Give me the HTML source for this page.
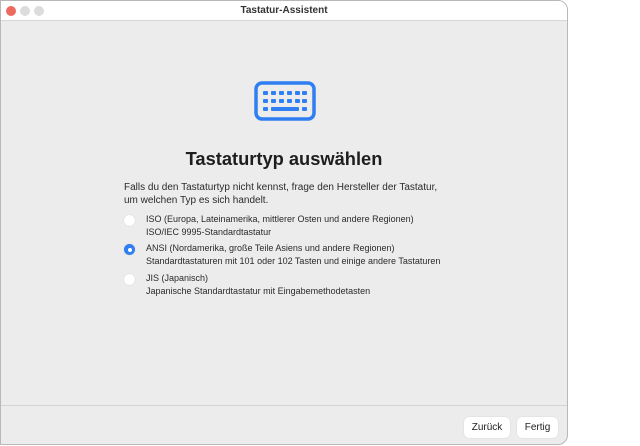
<!DOCTYPE html>
<html><head><meta charset="utf-8"><style>
*{margin:0;padding:0;box-sizing:border-box}
body{width:640px;height:446px;background:#fff;font-family:"Liberation Sans",sans-serif;position:relative;overflow:hidden}
.win{position:absolute;left:0;top:0;width:568px;height:445px;border:1px solid #b8b8b8;border-radius:0 10px 10px 0;background:#ececec;overflow:hidden}
.tb{height:20px;background:#fff;border-bottom:1px solid #d6d6d6;text-align:center;font-size:10px;font-weight:bold;color:#333;line-height:19px}
.dot{position:absolute;top:5px;width:10px;height:10px;border-radius:50%;background:#dcdcdc}
.t{position:absolute;left:0;width:566px;text-align:center;top:147px;font-size:18.3px;font-weight:bold;color:#1e1e1e}
.p{position:absolute;left:123px;font-size:10px;color:#2a2a2a;line-height:13px}
.o{font-size:9px}
.r{position:absolute;left:123px;width:11px;height:11px;border-radius:50%;background:#fff;box-shadow:0 0 1px #bbb}
.r.on{background:#2f7ff3}
.r.on::after{content:"";position:absolute;left:3.5px;top:3.5px;width:4px;height:4px;border-radius:50%;background:#fff}
.sep{position:absolute;left:0;right:0;top:404px;border-top:1px solid #d4d4d4}
.btn{position:absolute;top:416px;height:21px;background:#fff;border-radius:5px;font-size:10px;color:#222;text-align:center;line-height:21px;box-shadow:0 0 1px #bbb}
</style></head><body>
<div class="win">
<div class="tb">Tastatur-Assistent</div>
<div class="dot" style="left:5px;background:#ec6a5e"></div>
<div class="dot" style="left:19px"></div>
<div class="dot" style="left:33px"></div>
<svg style="position:absolute;left:253px;top:80px" width="62" height="40" viewBox="0 0 62 40">
<rect x="2" y="2" width="58" height="36" rx="6" fill="none" stroke="#2f7ff3" stroke-width="3.5"/>
<g fill="#2f7ff3">
<rect x="9" y="10" width="5" height="4" rx="1"/><rect x="17" y="10" width="5" height="4" rx="1"/><rect x="25" y="10" width="5" height="4" rx="1"/><rect x="33" y="10" width="5" height="4" rx="1"/><rect x="41" y="10" width="5" height="4" rx="1"/><rect x="48" y="10" width="5" height="4" rx="1"/>
<rect x="9" y="18" width="5" height="4" rx="1"/><rect x="17" y="18" width="5" height="4" rx="1"/><rect x="25" y="18" width="5" height="4" rx="1"/><rect x="33" y="18" width="5" height="4" rx="1"/><rect x="41" y="18" width="5" height="4" rx="1"/><rect x="48" y="18" width="5" height="4" rx="1"/>
<rect x="9" y="26" width="5" height="4" rx="1"/><rect x="17" y="26" width="28" height="4" rx="1"/><rect x="48" y="26" width="5" height="4" rx="1"/>
</g></svg>
<div class="t">Tastaturtyp auswählen</div>
<div class="p" style="top:180px">Falls du den Tastaturtyp nicht kennst, frage den Hersteller der Tastatur,<br>um welchen Typ es sich handelt.</div>
<div class="r" style="top:214px"></div>
<div class="p o" style="left:145px;top:212px">ISO (Europa, Lateinamerika, mittlerer Osten und andere Regionen)<br>ISO/IEC 9995-Standardtastatur</div>
<div class="r on" style="top:243px"></div>
<div class="p o" style="left:145px;top:241px">ANSI (Nordamerika, große Teile Asiens und andere Regionen)<br>Standardtastaturen mit 101 oder 102 Tasten und einige andere Tastaturen</div>
<div class="r" style="top:273px"></div>
<div class="p o" style="left:145px;top:271px">JIS (Japanisch)<br>Japanische Standardtastatur mit Eingabemethodetasten</div>
<div class="sep"></div>
<div class="btn" style="left:463px;width:46px">Zurück</div>
<div class="btn" style="left:516px;width:41px">Fertig</div>
</div>
</body></html>
